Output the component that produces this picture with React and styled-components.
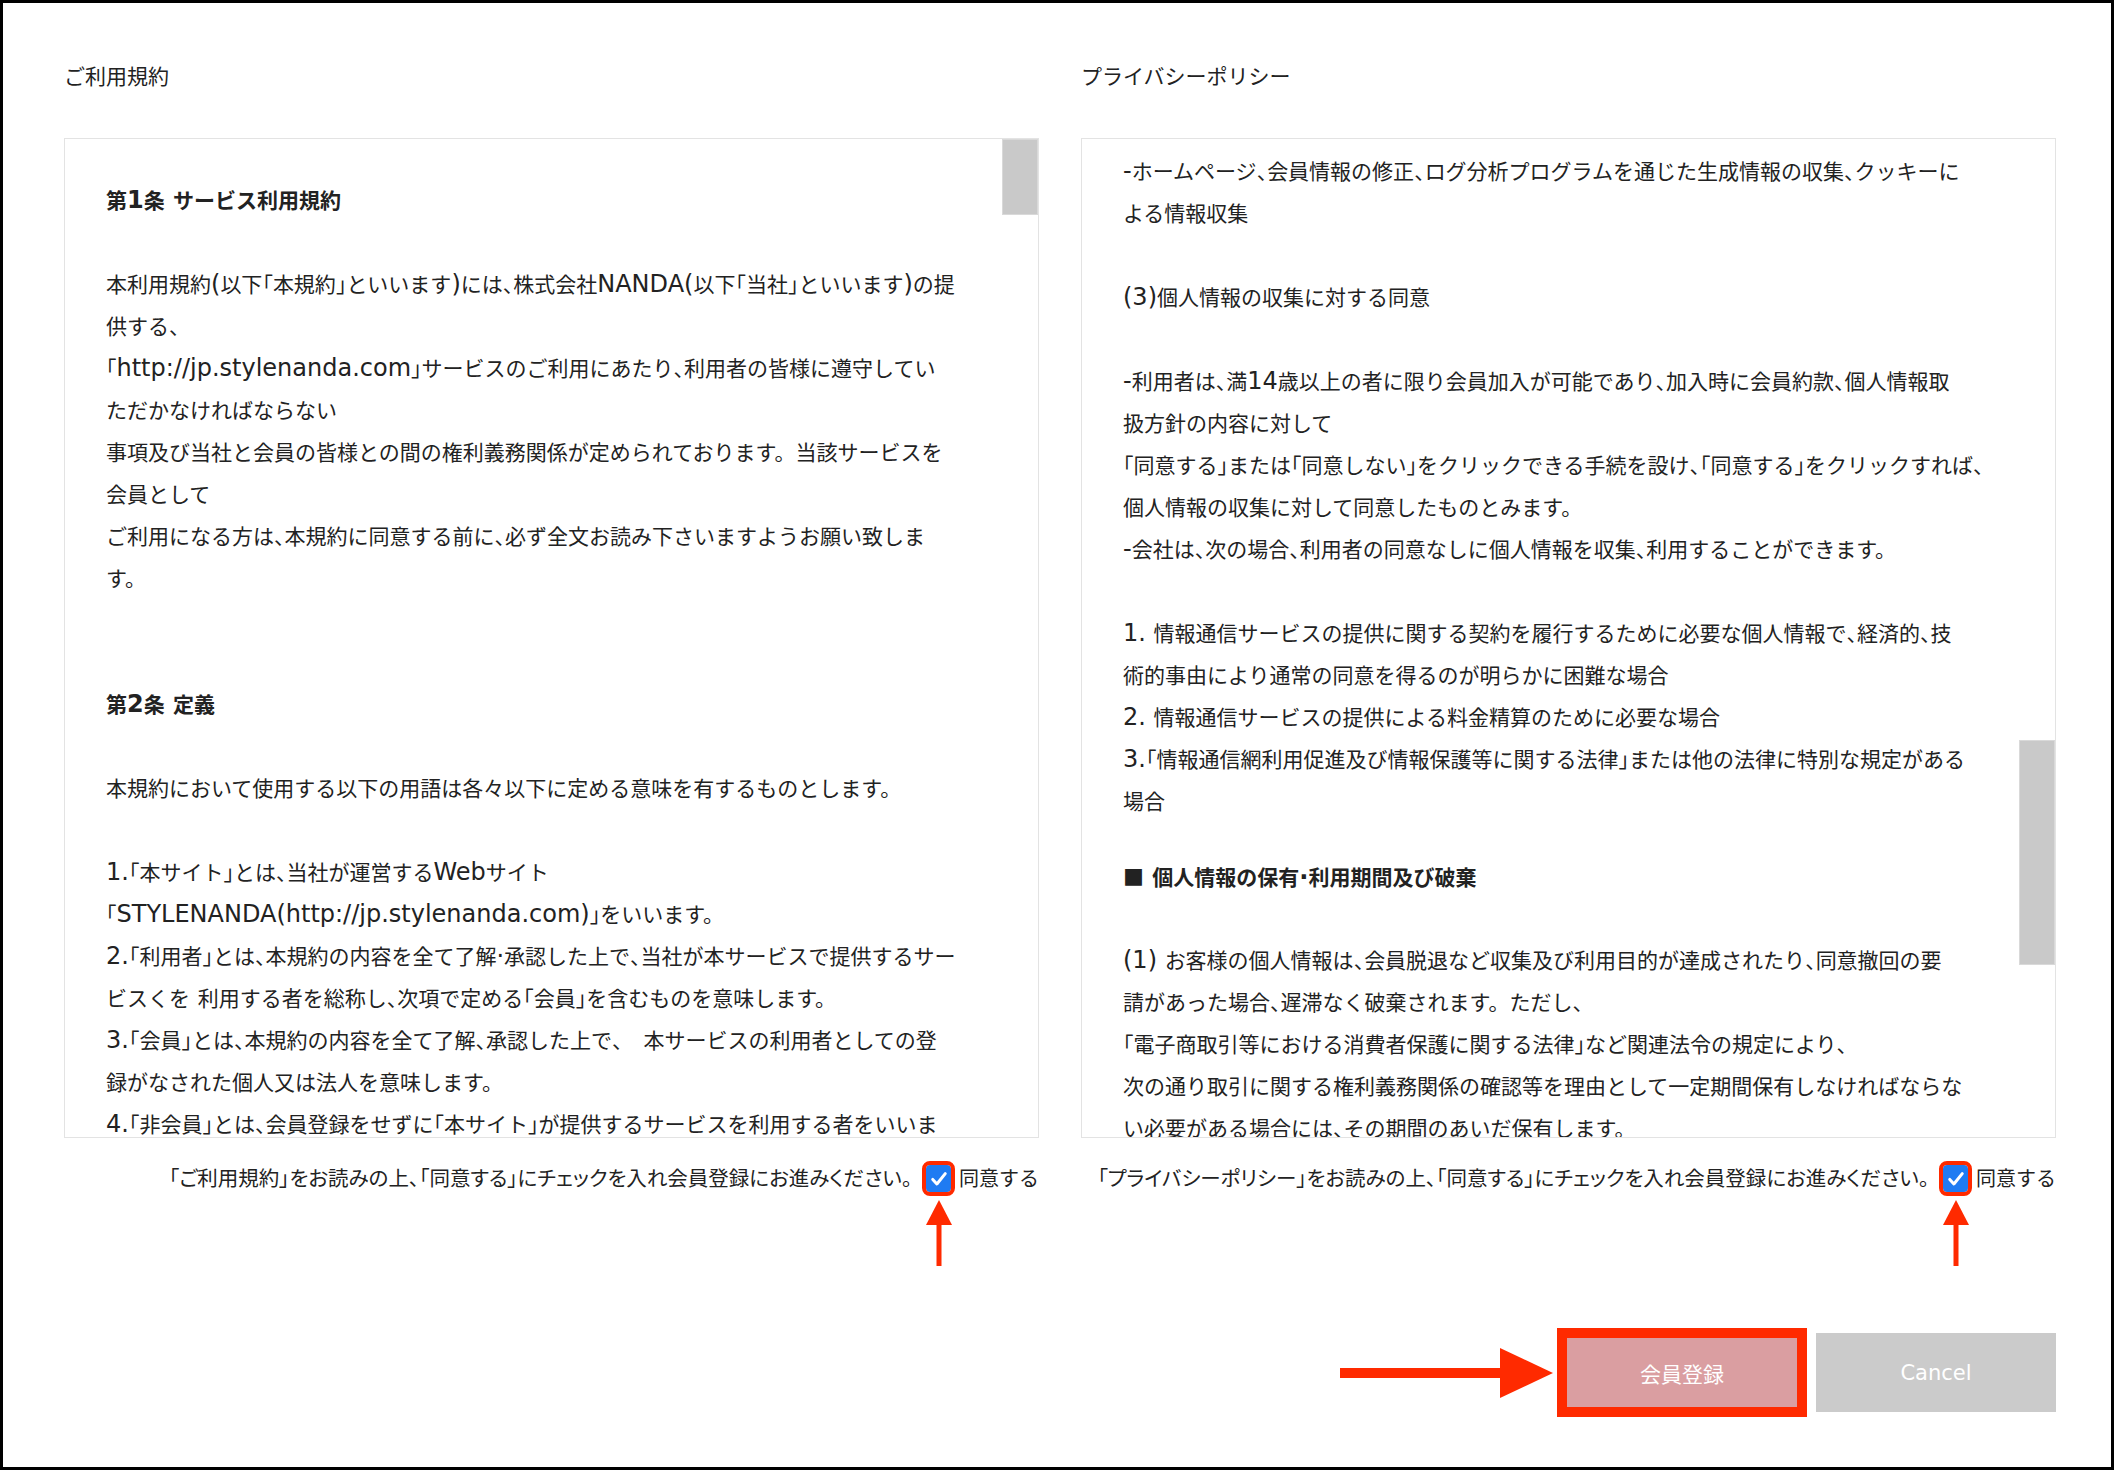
import React from "react";
import styled, { createGlobalStyle, css } from "styled-components";

const GlobalStyle = createGlobalStyle`
  html, body {
    margin: 0;
    padding: 0;
    background: #fff;
  }
  body {
    font-family: "Noto Sans CJK JP", "DejaVu Sans", sans-serif;
    color: #222;
  }
`;

const RED = "#ff2a00";

const Page = styled.div`
  width: 2114px;
  height: 1470px;
  box-sizing: border-box;
  border: 3px solid #000;
  padding: 57px 55px 0 61px;
  display: flex;
  flex-direction: column;
`;

const Columns = styled.div`
  display: grid;
  grid-template-columns: 975px 975px;
  column-gap: 42px;
`;

const Column = styled.section`
  display: flex;
  flex-direction: column;
`;

const Title = styled.h2`
  margin: 0 0 48px;
  font-size: 21px;
  font-weight: normal;
  line-height: 30px;
  color: #222;
`;

const Box = styled.div`
  height: 1000px;
  box-sizing: border-box;
  border: 1px solid #e3e3e3;
  display: flex;
  overflow: hidden;
`;

const Body = styled.div`
  flex: 1;
  min-width: 0;
  padding: ${(p) => p.$top}px 0 0 41px;
  font-size: 21px;
  line-height: 42px;
  color: #222;
`;

const Line = styled.div`
  height: 42px;
  white-space: nowrap;
`;

const Blank = styled.div`
  height: ${(p) => (p.$n || 1) * 42}px;
`;

const Heading = styled.div`
  height: 42px;
  white-space: nowrap;
  font-weight: bold;
  margin: ${(p) => p.$mt || 0}px 0 ${(p) => p.$mb || 0}px;
`;

const Lat = styled.span`
  font-family: "DejaVu Sans", sans-serif;
  font-size: 24px;
  line-height: 1;
`;

const Half = styled.span`
  font-feature-settings: "halt";
`;

const Track = styled.div`
  flex: none;
  width: 36px;
`;

const Thumb = styled.div`
  margin-top: ${(p) => p.$top}px;
  height: ${(p) => p.$height}px;
  box-sizing: border-box;
  background: #c9c9c9;
  border: 1px solid #d9d9d9;
`;

const AgreeRow = styled.div`
  margin-top: 19px;
  height: 40px;
  display: flex;
  align-items: center;
  justify-content: flex-end;
  font-size: 20px;
  color: #222;
`;

const AgreeText = styled.span`
  font-size: 20.5px;
  font-feature-settings: "palt";
  white-space: nowrap;
`;

const CheckWrap = styled.span`
  position: relative;
  display: inline-flex;
  margin: 3px 8px 0 14px;
`;

const CheckBox = styled.span`
  width: 25px;
  height: 27px;
  border-radius: 4px;
  background: #1f7bf2;
  outline: 4px solid ${RED};
  display: flex;
  align-items: center;
  justify-content: center;
`;

const UpArrow = styled.svg`
  position: absolute;
  top: calc(100% + 8px);
  left: 50%;
  transform: translateX(-50%);
`;

const Actions = styled.div`
  margin-top: 136px;
  display: flex;
  justify-content: flex-end;
  gap: 14px;
`;

const Annotated = styled.div`
  position: relative;
  display: flex;
`;

const Button = styled.button`
  width: 240px;
  height: 79px;
  border: none;
  padding: 0;
  color: #fff;
  font-family: "DejaVu Sans", "Noto Sans CJK JP", sans-serif;
  font-size: 21px;
  background: ${(p) => (p.$primary ? "#da9ea1" : "#cbcbcb")};
  ${(p) =>
    p.$marked &&
    css`
      outline: 10px solid ${RED};
      outline-offset: -5px;
    `}
`;

const RightArrow = styled.svg`
  position: absolute;
  right: calc(100% + 9px);
  top: 50%;
  transform: translateY(-50%);
`;

const TOKEN = /([\x20-\x7e·]+|[「」、])/;

const rich = (text) =>
  text.split(TOKEN).map((part, i) => {
    if (!part) return null;
    if (/^[「」、]$/.test(part)) return <Half key={i}>{part}</Half>;
    if (/^[\x20-\x7e·]+$/.test(part)) return <Lat key={i}>{part}</Lat>;
    return part;
  });

const terms = [
  { h: "第1条 サービス利用規約" },
  { gap: 1 },
  "本利用規約(以下「本規約」といいます)には、株式会社NANDA(以下「当社」といいます)の提",
  "供する、",
  "「http://jp.stylenanda.com」サービスのご利用にあたり、利用者の皆様に遵守してい",
  "ただかなければならない",
  "事項及び当社と会員の皆様との間の権利義務関係が定められております。当該サービスを",
  "会員として",
  "ご利用になる方は、本規約に同意する前に、必ず全文お読み下さいますようお願い致しま",
  "す。",
  { gap: 2 },
  { h: "第2条 定義" },
  { gap: 1 },
  "本規約において使用する以下の用語は各々以下に定める意味を有するものとします。",
  { gap: 1 },
  "1.「本サイト」とは、当社が運営するWebサイト",
  "「STYLENANDA(http://jp.stylenanda.com)」をいいます。",
  "2.「利用者」とは、本規約の内容を全て了解·承認した上で、当社が本サービスで提供するサー",
  "ビスくを 利用する者を総称し、次項で定める「会員」を含むものを意味します。",
  "3.「会員」とは、本規約の内容を全て了解、承認した上で、　本サービスの利用者としての登",
  "録がなされた個人又は法人を意味します。",
  "4.「非会員」とは、会員登録をせずに「本サイト」が提供するサービスを利用する者をいいま",
  "す。",
];

const privacy = [
  "-ホームページ、会員情報の修正、ログ分析プログラムを通じた生成情報の収集、クッキーに",
  "よる情報収集",
  { gap: 1 },
  "(3)個人情報の収集に対する同意",
  { gap: 1 },
  "-利用者は、満14歳以上の者に限り会員加入が可能であり、加入時に会員約款、個人情報取",
  "扱方針の内容に対して",
  "「同意する」または「同意しない」をクリックできる手続を設け、「同意する」をクリックすれば、",
  "個人情報の収集に対して同意したものとみます。",
  "-会社は、次の場合、利用者の同意なしに個人情報を収集、利用することができます。",
  { gap: 1 },
  "1. 情報通信サービスの提供に関する契約を履行するために必要な個人情報で、経済的、技",
  "術的事由により通常の同意を得るのが明らかに困難な場合",
  "2. 情報通信サービスの提供による料金精算のために必要な場合",
  "3.「情報通信網利用促進及び情報保護等に関する法律」または他の法律に特別な規定がある",
  "場合",
  { h: "■ 個人情報の保有·利用期間及び破棄", mt: 34, mb: 41 },
  "(1) お客様の個人情報は、会員脱退など収集及び利用目的が達成されたり、同意撤回の要",
  "請があった場合、遅滞なく破棄されます。ただし、",
  "「電子商取引等における消費者保護に関する法律」など関連法令の規定により、",
  "次の通り取引に関する権利義務関係の確認等を理由として一定期間保有しなければならな",
  "い必要がある場合には、その期間のあいだ保有します。",
];

const renderLines = (lines) =>
  lines.map((item, i) => {
    if (typeof item === "string") return <Line key={i}>{rich(item)}</Line>;
    if (item.gap) return <Blank key={i} $n={item.gap} />;
    return (
      <Heading key={i} $mt={item.mt} $mb={item.mb}>
        {rich(item.h)}
      </Heading>
    );
  });

const Check = () => (
  <CheckWrap>
    <CheckBox>
      <svg width="20" height="20" viewBox="0 0 24 24">
        <path
          d="M4.5 12.5l5 5.5L19.5 5.5"
          fill="none"
          stroke="#fff"
          strokeWidth="3.6"
          strokeLinecap="round"
          strokeLinejoin="round"
        />
      </svg>
    </CheckBox>
    <UpArrow width="26" height="66" viewBox="0 0 26 66">
      <polygon points="13,0 26,25 0,25" fill={RED} />
      <rect x="10.5" y="24" width="5" height="42" fill={RED} />
    </UpArrow>
  </CheckWrap>
);

const Panel = ({ title, lines, top, thumb, agree }) => (
  <Column>
    <Title>{title}</Title>
    <Box>
      <Body $top={top}>{renderLines(lines)}</Body>
      <Track>
        <Thumb $top={thumb.top} $height={thumb.height} />
      </Track>
    </Box>
    <AgreeRow>
      <AgreeText>{agree}</AgreeText>
      <Check />
      <span>同意する</span>
    </AgreeRow>
  </Column>
);

const App = () => (
  <>
    <GlobalStyle />
    <Page>
      <Columns>
        <Panel
          title="ご利用規約"
          lines={terms}
          top={39}
          thumb={{ top: 0, height: 76 }}
          agree="「ご利用規約」をお読みの上、「同意する」にチェックを入れ会員登録にお進みください。"
        />
        <Panel
          title="プライバシーポリシー"
          lines={privacy}
          top={10}
          thumb={{ top: 601, height: 225 }}
          agree="「プライバシーポリシー」をお読みの上、「同意する」にチェックを入れ会員登録にお進みください。"
        />
      </Columns>
      <Actions>
        <Annotated>
          <RightArrow width="213" height="50" viewBox="0 0 213 50">
            <rect x="0" y="20" width="164" height="10" fill={RED} />
            <polygon points="160,0 213,25 160,50" fill={RED} />
          </RightArrow>
          <Button $primary $marked>
            会員登録
          </Button>
        </Annotated>
        <Button>Cancel</Button>
      </Actions>
    </Page>
  </>
);

export default App;
